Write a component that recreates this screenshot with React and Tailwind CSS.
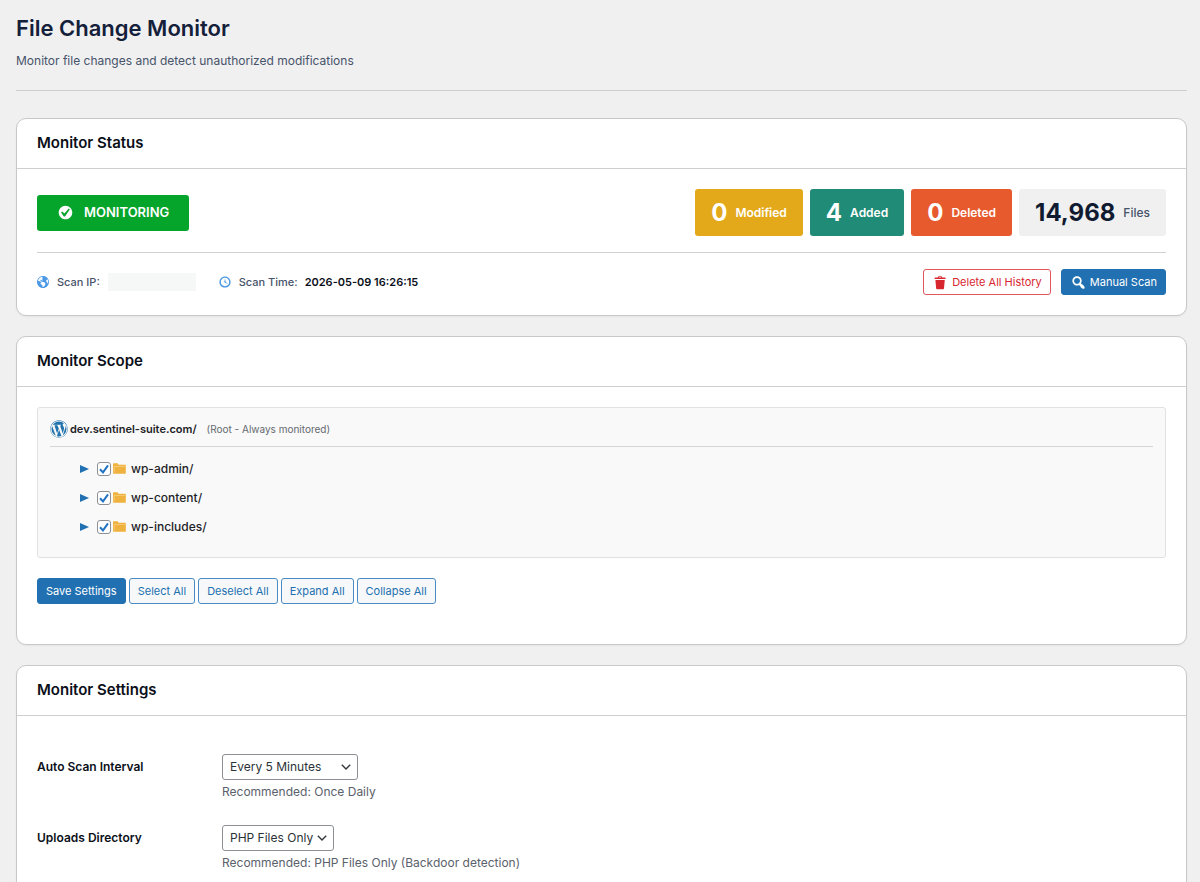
import { useState } from 'react';
import { FaWordpress } from 'react-icons/fa';

const ICONS = {
  check: 'M10 2c-4.42 0-8 3.58-8 8s3.58 8 8 8 8-3.58 8-8-3.58-8-8-8zm-.615 12.66h-1.34l-3.24-4.54 1.341-1.25 2.569 2.4 5.141-5.931 1.34.94-5.811 8.381z',
  trash: 'M12 4h3c.6 0 1 .4 1 1v1H3V5c0-.6.5-1 1-1h3c.2-1.1 1.3-2 2.5-2s2.3.9 2.5 2zM8 4h3c-.2-.6-.9-1-1.5-1S8.2 3.4 8 4zM4 7h11l-.9 10.1c0 .5-.5.9-1 .9H5.9c-.5 0-.9-.4-1-.9L4 7z',
  search: 'M12.14 4.18c1.87 1.87 2.11 4.75.72 6.89.12.1.22.21.36.31.2.16.47.36.81.59.34.24.56.39.66.47.42.31.73.57.94.78.32.32.6.65.84 1 .25.35.44.69.59 1.04.14.35.21.68.18 1-.02.32-.14.59-.36.81s-.49.34-.81.36c-.31.02-.65-.04-.99-.19-.35-.14-.7-.34-1.04-.59-.35-.24-.68-.52-1-.84-.21-.21-.47-.52-.77-.93-.1-.13-.25-.35-.47-.66-.22-.32-.4-.57-.56-.78-.16-.2-.29-.35-.44-.5-2.07 1.09-4.69.76-6.44-.98-2.14-2.15-2.14-5.64 0-7.78 2.15-2.15 5.63-2.15 7.78 0zm-1.41 6.36c1.36-1.37 1.36-3.58 0-4.95-1.37-1.37-3.59-1.37-4.95 0-1.37 1.37-1.37 3.58 0 4.95 1.36 1.37 3.58 1.37 4.95 0z',
  globe: 'M9 0C4.03 0 0 4.03 0 9s4.03 9 9 9 9-4.03 9-9-4.03-9-9-9zm3.46 11.95c0 1.47-.8 3.3-4.06 4.7.3-4.17-2.52-3.69-3.2-5 .126-1.1.804-2.063 1.8-2.55-1.552-.266-3-.96-4.18-2 .05.47.28.904.64 1.21-.782-.295-1.458-.817-1.94-1.5.977-3.225 3.883-5.482 7.25-5.63-.84 1.38-1.5 4.13 0 5.57C7.23 7 6.26 5 5.41 5.79c-1.13 1.06.33 2.51 3.42 3.08 3.29.59 3.66 1.58 3.63 3.08zm1.34-4c-.32-1.11.62-2.23 1.69-3.14 1.356 1.955 1.67 4.45.84 6.68-.77-1.89-2.17-2.32-2.53-3.57v.03z',
  clock: 'M10 2c4.42 0 8 3.58 8 8s-3.58 8-8 8-8-3.58-8-8 3.58-8 8-8zm0 14c3.31 0 6-2.69 6-6s-2.69-6-6-6-6 2.69-6 6 2.69 6 6 6zm-.71-5.29c.07.05.14.1.23.15l-.02.02L14 13l-3.03-3.19L10 5l-.97 4.81h.01c0 .02-.01.05-.02.09S9 9.97 9 10c0 .28.1.52.29.71z',
};

const FOLDERS = ['wp-admin/', 'wp-content/', 'wp-includes/'];

const STATS = [
  { value: '0', label: 'Modified', box: 'bg-[#e3a91b] text-white' },
  { value: '4', label: 'Added', box: 'bg-[#208b76] text-white' },
  { value: '0', label: 'Deleted', box: 'bg-[#e65a2d] text-white' },
];

function Icon({ name, className, viewBox = '0 0 20 20' }) {
  return (
    <svg viewBox={viewBox} className={className} fill="currentColor" aria-hidden="true">
      <path d={ICONS[name]} />
    </svg>
  );
}

function Card({ title, bodyClass, children }) {
  return (
    <section className="bg-white border border-[#c6c8ca] rounded-[10px] shadow-xs">
      <h2 className="h-[50px] flex items-center px-5 border-b border-[#cdcfd1] text-[15px] font-semibold text-[#0b0f19]">
        {title}
      </h2>
      <div className={bodyClass}>{children}</div>
    </section>
  );
}

function Button({ variant = 'outline', children }) {
  const look = {
    primary: 'bg-[#2170b1] border-[#2170b1] text-white',
    outline: 'bg-[#f7f8f9] border-[#4a8bc4] text-[#2170b1]',
    danger: 'bg-white border-[#e2575c] text-[#d8262f]',
  }[variant];
  return (
    <button type="button" className={`flex items-center gap-[3px] h-[26px] px-2 border rounded-[3px] text-[11px] ${look}`}>
      {children}
    </button>
  );
}

function FolderRow({ name }) {
  const [checked, setChecked] = useState(true);
  return (
    <li className="flex items-center h-[29px]">
      <button type="button" aria-label={`Expand ${name}`} className="mr-2 text-[#2170b1]">
        <svg viewBox="0 0 9 8" className="w-[9px] h-2" fill="currentColor"><path d="M0 0l9 4-9 4z" /></svg>
      </button>
      <label className="flex items-center text-xs font-medium text-[#1d2327]">
        <span className="grid">
          <input
            type="checkbox"
            checked={checked}
            onChange={() => setChecked(!checked)}
            className="col-start-1 row-start-1 appearance-none size-[14px] bg-white border border-[#8c8f94] rounded-[3px]"
          />
          {checked && (
            <svg viewBox="0 0 14 14" className="col-start-1 row-start-1 size-[14px] pointer-events-none" fill="none" stroke="#2374c4" strokeWidth="2">
              <path d="M3 7.2l3 3.2L11 3.4" />
            </svg>
          )}
        </span>
        <svg viewBox="0 0 13 11" className="ml-0.5 mr-[5px] w-[13px] h-[11px]" fill="#f0b23e">
          <path d="M0 1.2C0 .5.4.2 1 .2h3.6l1 1.5H12c.6 0 .8.3.8.9v7.3c0 .6-.3.8-.8.8H.8c-.6 0-.8-.3-.8-.8z" />
          <path d="M1.2 9.6V3.4H12" fill="none" stroke="#fbe3b0" strokeWidth=".5" />
        </svg>
        {name}
      </label>
    </li>
  );
}

function SettingRow({ id, label, options, hint, width }) {
  return (
    <div className="flex items-start">
      <label htmlFor={id} className="w-[185px] shrink-0 leading-[26px] text-xs font-semibold text-[#0b0f19]">
        {label}
      </label>
      <div>
        <div className={`grid items-center ${width}`}>
          <select
            id={id}
            className="col-start-1 row-start-1 appearance-none h-[26px] pl-[7px] border border-[#8c8f94] rounded-[3px] bg-white text-xs text-[#2c3338]"
          >
            {options.map(o => <option key={o}>{o}</option>)}
          </select>
          <svg viewBox="0 0 10 6" className="col-start-1 row-start-1 justify-self-end mr-[7px] w-[10px] h-[6px] pointer-events-none" fill="none" stroke="#32373c" strokeWidth="1.4">
            <path d="M.8.8L5 5 9.2.8" />
          </svg>
        </div>
        <p className="mt-1 text-xs leading-4 text-[#5b616b]">{hint}</p>
      </div>
    </div>
  );
}

export default function App() {
  return (
    <div className="min-h-screen bg-[#f0f0f1] pl-4 pr-[13px] font-['Inter',sans-serif]">
      <header className="pt-3 pb-5 mb-[27px] border-b border-[#cdced1]">
        <h1 className="text-[22px] leading-8 font-semibold text-[#14203a]">File Change Monitor</h1>
        <p className="mt-2 leading-[18px] text-xs text-[#475369]">Monitor file changes and detect unauthorized modifications</p>
      </header>

      <main className="flex flex-col gap-5">
        <Card title="Monitor Status" bodyClass="p-5">
          <div className="flex items-center justify-between pb-4 border-b border-[#cfd1d3]">
            <div className="flex items-center gap-2.5 h-9 px-5 rounded-[3px] bg-[#05a42b] text-white text-[13px] font-semibold">
              <Icon name="check" className="size-[17px]" />
              MONITORING
            </div>
            <div className="flex gap-[7px]">
              {STATS.map(s => (
                <div key={s.label} className={`flex items-center gap-2 h-[47px] px-4 rounded-[3px] ${s.box}`}>
                  <span className="text-2xl font-bold">{s.value}</span>
                  <span className="text-xs font-semibold">{s.label}</span>
                </div>
              ))}
              <div className="flex items-center gap-2 h-[47px] px-4 rounded-[3px] bg-[#f0f0f1]">
                <span className="text-2xl font-bold text-[#101a30]">14,968</span>
                <span className="text-xs font-medium text-[#475369]">Files</span>
              </div>
            </div>
          </div>

          <div className="flex items-center justify-between pt-4">
            <div className="flex items-center gap-[22px] text-[11px] font-medium text-[#475369]">
              <div className="flex items-center gap-2">
                <Icon name="globe" viewBox="0 0 18 18" className="size-3 text-[#4b98e4]" />
                Scan IP:
                <span className="w-[88px] h-[18px] bg-[#f6f7f7]" />
              </div>
              <div className="flex items-center gap-[7px]">
                <Icon name="clock" className="size-[14px] text-[#4b98e4]" />
                Scan Time:
                <span className="font-semibold text-[#0b0f19]">2026-05-09 16:26:15</span>
              </div>
            </div>
            <div className="flex gap-2.5">
              <Button variant="danger">
                <Icon name="trash" className="size-[17px]" />
                Delete All History
              </Button>
              <Button variant="primary">
                <Icon name="search" className="size-[17px]" />
                Manual Scan
              </Button>
            </div>
          </div>
        </Card>

        <Card title="Monitor Scope" bodyClass="px-5 pt-5 pb-10">
          <div className="px-3 pt-3 pb-4 border border-[#e0e1e3] rounded-[3px] bg-[#f9f9f9]">
            <div className="flex items-center pb-2 border-b border-[#d3d5d7] text-[11px]">
              <FaWordpress className="size-[18px] mr-0.5 text-[#2173ad]" />
              <span className="font-semibold text-[#1d2327]">dev.sentinel-suite.com/</span>
              <span className="ml-2.5 text-[10px] text-[#646970]">(Root - Always monitored)</span>
            </div>
            <ul className="pt-[7px] pl-[30px]">
              {FOLDERS.map(f => <FolderRow key={f} name={f} />)}
            </ul>
          </div>
          <div className="flex gap-[3px] mt-5">
            <Button variant="primary">Save Settings</Button>
            <Button>Select All</Button>
            <Button>Deselect All</Button>
            <Button>Expand All</Button>
            <Button>Collapse All</Button>
          </div>
        </Card>

        <Card title="Monitor Settings" bodyClass="flex flex-col gap-[25px] px-5 pt-[38px] pb-8">
          <SettingRow
            id="interval"
            label="Auto Scan Interval"
            options={['Every 5 Minutes', 'Every Hour', 'Once Daily']}
            hint="Recommended: Once Daily"
            width="w-[136px]"
          />
          <SettingRow
            id="uploads"
            label="Uploads Directory"
            options={['PHP Files Only', 'All Files']}
            hint="Recommended: PHP Files Only (Backdoor detection)"
            width="w-[112px]"
          />
        </Card>
      </main>
    </div>
  );
}
